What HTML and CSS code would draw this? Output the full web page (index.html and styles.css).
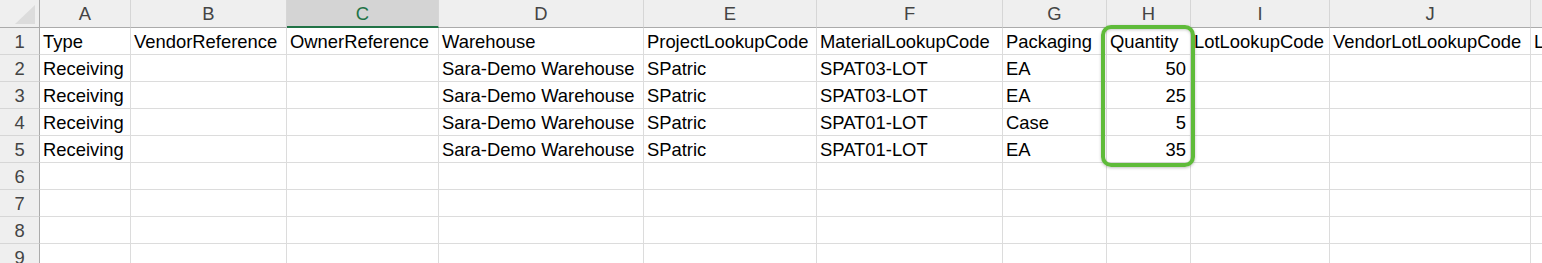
FILE: index.html
```html
<!DOCTYPE html>
<html lang="en">
<head>
    <meta charset="UTF-8">
    <title>Receiving import</title>
    <link rel="stylesheet" href="styles.css">
</head>
<body>
    <div class="sheet">
        <!-- column headers -->
        <div class="hd corner"><span class="corner-mark"></span></div>
        <div class="hd col">A</div>
        <div class="hd col">B</div>
        <div class="hd col selected">C</div>
        <div class="hd col">D</div>
        <div class="hd col">E</div>
        <div class="hd col">F</div>
        <div class="hd col">G</div>
        <div class="hd col">H</div>
        <div class="hd col">I</div>
        <div class="hd col">J</div>
        <div class="hd col">K</div>

        <!-- row 1 -->
        <div class="hd row">1</div>
        <div class="cell">Type</div>
        <div class="cell">VendorReference</div>
        <div class="cell">OwnerReference</div>
        <div class="cell">Warehouse</div>
        <div class="cell">ProjectLookupCode</div>
        <div class="cell">MaterialLookupCode</div>
        <div class="cell">Packaging</div>
        <div class="cell">Quantity</div>
        <div class="cell">LotLookupCode</div>
        <div class="cell">VendorLotLookupCode</div>
        <div class="cell">LicensePlateLookupCode</div>

        <!-- row 2 -->
        <div class="hd row">2</div>
        <div class="cell">Receiving</div>
        <div class="cell"></div>
        <div class="cell"></div>
        <div class="cell">Sara-Demo Warehouse</div>
        <div class="cell">SPatric</div>
        <div class="cell">SPAT03-LOT</div>
        <div class="cell">EA</div>
        <div class="cell num">50</div>
        <div class="cell"></div>
        <div class="cell"></div>
        <div class="cell"></div>

        <!-- row 3 -->
        <div class="hd row">3</div>
        <div class="cell">Receiving</div>
        <div class="cell"></div>
        <div class="cell"></div>
        <div class="cell">Sara-Demo Warehouse</div>
        <div class="cell">SPatric</div>
        <div class="cell">SPAT03-LOT</div>
        <div class="cell">EA</div>
        <div class="cell num">25</div>
        <div class="cell"></div>
        <div class="cell"></div>
        <div class="cell"></div>

        <!-- row 4 -->
        <div class="hd row">4</div>
        <div class="cell">Receiving</div>
        <div class="cell"></div>
        <div class="cell"></div>
        <div class="cell">Sara-Demo Warehouse</div>
        <div class="cell">SPatric</div>
        <div class="cell">SPAT01-LOT</div>
        <div class="cell">Case</div>
        <div class="cell num">5</div>
        <div class="cell"></div>
        <div class="cell"></div>
        <div class="cell"></div>

        <!-- row 5 -->
        <div class="hd row">5</div>
        <div class="cell">Receiving</div>
        <div class="cell"></div>
        <div class="cell"></div>
        <div class="cell">Sara-Demo Warehouse</div>
        <div class="cell">SPatric</div>
        <div class="cell">SPAT01-LOT</div>
        <div class="cell">EA</div>
        <div class="cell num">35</div>
        <div class="cell"></div>
        <div class="cell"></div>
        <div class="cell"></div>

        <!-- empty rows -->
        <div class="hd row">6</div>
        <div class="cell"></div><div class="cell"></div><div class="cell"></div><div class="cell"></div><div class="cell"></div><div class="cell"></div><div class="cell"></div><div class="cell"></div><div class="cell"></div><div class="cell"></div><div class="cell"></div>
        <div class="hd row">7</div>
        <div class="cell"></div><div class="cell"></div><div class="cell"></div><div class="cell"></div><div class="cell"></div><div class="cell"></div><div class="cell"></div><div class="cell"></div><div class="cell"></div><div class="cell"></div><div class="cell"></div>
        <div class="hd row">8</div>
        <div class="cell"></div><div class="cell"></div><div class="cell"></div><div class="cell"></div><div class="cell"></div><div class="cell"></div><div class="cell"></div><div class="cell"></div><div class="cell"></div><div class="cell"></div><div class="cell"></div>
        <div class="hd row">9</div>
        <div class="cell"></div><div class="cell"></div><div class="cell"></div><div class="cell"></div><div class="cell"></div><div class="cell"></div><div class="cell"></div><div class="cell"></div><div class="cell"></div><div class="cell"></div><div class="cell"></div>

        <!-- highlight round the Quantity column -->
        <div class="highlight"></div>
    </div>
</body>
</html>
```

FILE: styles.css
```css
body {
    margin: 0;
    padding: 0;
    background-color: #fff;
    font-family: "Liberation Sans", Arial, sans-serif;
    overflow: hidden;
}

.sheet {
    position: relative;
    display: grid;
    grid-template-columns: 40px 91px 156px 152px 205px 173px 186px 104px 84px 139px 201px 180px;
    grid-template-rows: 28px;
    grid-auto-rows: 27px;
    width: max-content;
    font-size: 18.4px;
}

.cell {
    box-sizing: border-box;
    border-right: 1px solid #dcdcdc;
    border-bottom: 1px solid #dcdcdc;
    padding: 0 3px;
    color: #000;
    white-space: nowrap;
    overflow: visible;
    line-height: 26px;
    padding-top: 1px;
}

.cell.num {
    text-align: right;
    padding-right: 4px;
}

.hd {
    box-sizing: border-box;
    background-color: #efefef;
    color: #444;
    text-align: center;
    line-height: 26px;
}

.hd.col {
    border-right: 1px solid #d6d6d6;
    border-bottom: 1px solid #ababab;
    padding-top: 1px;
}

.hd.col.selected {
    background-color: #d4d4d4;
    color: #217346;
    border-bottom: 2px solid #217346;
}

.hd.row {
    border-right: 1px solid #ababab;
    border-bottom: 1px solid #d6d6d6;
    padding-top: 1px;
}

.hd.corner {
    position: relative;
    border-right: 1px solid #ababab;
    border-bottom: 1px solid #ababab;
}

.corner-mark {
    position: absolute;
    right: 4px;
    bottom: 3px;
    width: 20px;
    height: 19px;
    background-color: #dcdcdc;
    clip-path: polygon(100% 0, 100% 100%, 0 100%);
}

.highlight {
    position: absolute;
    left: 1101px;
    top: 25px;
    width: 94px;
    height: 142px;
    box-sizing: border-box;
    border: 4px solid #5fbb3a;
    border-radius: 10px;
    box-shadow: 0 1px 3px rgba(0, 0, 0, 0.25), inset 0 1px 3px rgba(0, 0, 0, 0.2);
    pointer-events: none;
}
```
